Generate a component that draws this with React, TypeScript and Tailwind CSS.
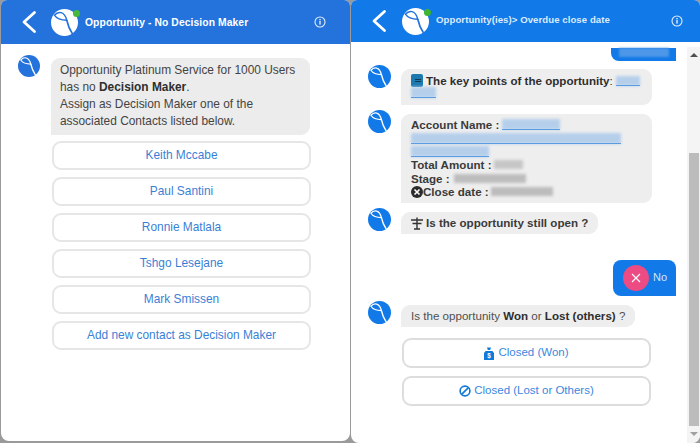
import React from "react";

function Logo({ size, bg, fg }: { size: number; bg: string; fg: string }) {
  return (
    <svg width={size} height={size} viewBox="0 0 24 24" className="shrink-0">
      <circle cx="12" cy="12" r="12" fill={bg} />
      <path d="M3 5.5 C6.5 1.5 12 2 14 10 C9 10 5 8.5 3 5.5 Z" fill="none" stroke={fg} strokeWidth="1.3" strokeLinejoin="round" />
      <path d="M14 10 C15 14.5 16.8 18.5 18.8 21.5" fill="none" stroke={fg} strokeWidth="1.5" strokeLinecap="round" />
    </svg>
  );
}

function HeaderLogo({ green }: { green: string }) {
  return (
    <div className="relative shrink-0">
      <Logo size={27} bg="#ffffff" fg="#2472db" />
      <div className="absolute top-[1px] right-[-2px] w-[7px] h-[7px] rounded-full" style={{ background: green }} />
    </div>
  );
}

function Back() {
  return (
    <svg width="16" height="24" viewBox="0 0 16 24" className="shrink-0">
      <path d="M13.5 2.5 L3 12 L13.5 21.5" fill="none" stroke="#ffffff" strokeWidth="2.8" strokeLinecap="round" strokeLinejoin="round" />
    </svg>
  );
}

function Info() {
  return (
    <svg width="12" height="12" viewBox="0 0 12 12" className="shrink-0">
      <circle cx="6" cy="6" r="5" fill="none" stroke="#e4eefb" strokeWidth="1.1" />
      <rect x="5.3" y="5" width="1.4" height="3.6" fill="#e4eefb" />
      <rect x="5.3" y="3" width="1.4" height="1.3" fill="#e4eefb" />
    </svg>
  );
}

function ContactButton({ label }: { label: string }) {
  return (
    <button className="w-[259px] h-[29px] rounded-[9px] border-2 border-[#e6e6e6] bg-white text-[#3a7fd6] text-[11.9px] flex items-center justify-center">
      {label}
    </button>
  );
}

function Smudge({ className }: { className: string }) {
  return <span className={"inline-block blur-[1.5px] " + className} />;
}

function BlueSmudge({ className }: { className: string }) {
  return (
    <span className={"relative inline-block " + className}>
      <span className="absolute inset-0 bg-[#b5cfeb] blur-[1.5px]" />
      <span className="absolute left-0 right-0 bottom-0 h-[1px] bg-[#5b9be0]" />
    </span>
  );
}

export default function App() {
  const contacts = ["Keith Mccabe", "Paul Santini", "Ronnie Matlala", "Tshgo Lesejane", "Mark Smissen", "Add new contact as Decision Maker"];
  return (
    <div className="w-[700px] h-[443px] overflow-hidden flex bg-[#9a9a9a] text-[#333333]" style={{ fontFamily: '"Liberation Sans", Arial, sans-serif' }}>
      {/* Left */}
      <div className="w-[349px] ml-[1px] h-[441px] bg-white rounded-t-[6px] rounded-b-[8px] overflow-hidden flex flex-col">
        <div className="h-[44px] bg-[#2472db] flex items-center pl-[20px] pr-[24px] shrink-0">
          <Back />
          <div className="w-[14px]" />
          <HeaderLogo green="#46b83a" />
          <span className="ml-[7px] mt-[1px] flex-1 text-white font-bold text-[10.3px] tracking-[0.1px]">Opportunity - No Decision Maker</span>
          <Info />
        </div>
        <div className="flex pl-[17px] pt-[11px]">
          <Logo size={22} bg="#2472db" fg="#ffffff" />
          <div className="ml-[11px] mt-[3px] flex flex-col">
            <div className="w-[259px] h-[77px] bg-[#ececec] rounded-[9px] rounded-bl-none pl-[9px] pt-[4px] text-[11.9px] leading-[17px] text-[#444444]">
              <div>Opportunity Platinum Service for 1000 Users</div>
              <div>has no <b className="text-[#2f2f2f]">Decision Maker</b>.</div>
              <div>Assign as Decision Maker one of the</div>
              <div>associated Contacts listed below.</div>
            </div>
            <div className="flex flex-col gap-[7px] mt-[6px] ml-[1px]">
              {contacts.map((c) => (
                <ContactButton key={c} label={c} />
              ))}
            </div>
          </div>
        </div>
      </div>
      <div className="w-[1px]" />
      {/* Right */}
      <div className="w-[349px] bg-white rounded-t-[6px] rounded-b-[8px] overflow-hidden flex flex-col h-[443px]">
        <div className="h-[42px] bg-[#1179e8] flex items-center pl-[20px] pr-[17px] shrink-0">
          <Back />
          <div className="w-[15px]" />
          <HeaderLogo green="#3fb52f" />
          <span className="ml-[7px] flex-1 text-[#dcebfb] text-[9.6px] font-bold tracking-[0.07px] -mt-[1px]">Opportunity(ies)&gt; Overdue close date</span>
          <Info />
        </div>
        <div className="flex flex-1 min-h-0">
          <div className="flex-1 min-w-0 flex flex-col pt-[6px] text-[#333333] text-[11.6px] leading-[13.4px]">
            <div className="self-end w-[65px] h-[13px] bg-[#1179e8] rounded-bl-[8px] mr-[11px] flex justify-center">
              <span className="w-[50px] h-[9px] bg-[#4c97e8] blur-[1px]" />
            </div>
            <div className="flex pl-[17px] mt-[4px]">
              <Logo size={23} bg="#1179e8" fg="#ffffff" />
              <div className="ml-[10px] mt-[4px] w-[251px] h-[36px] bg-[#eeeeee] rounded-[9px] rounded-bl-none pl-[10px] pt-[5px]">
                <div className="flex items-center h-[13px] font-bold text-[#2e2e2e]">
                  <span className="w-[12px] h-[13px] mr-[3px] rounded-[2px] bg-[#1c7ab0] flex flex-col items-end justify-center gap-[1px] pr-[2px]">
                    <span className="w-[6px] h-[1px] bg-[#143a50]" />
                    <span className="w-[6px] h-[1px] bg-[#143a50]" />
                  </span>
                  The key points of the opportunity<span className="font-normal">:</span>
                  <BlueSmudge className="w-[24px] h-[10px] ml-[3px]" />
                </div>
                <BlueSmudge className="w-[25px] h-[11px] block" />
              </div>
            </div>
            <div className="flex pl-[17px] mt-[5px]">
              <Logo size={23} bg="#1179e8" fg="#ffffff" />
              <div className="ml-[10px] mt-[4px] w-[251px] h-[89px] bg-[#eeeeee] rounded-[9px] rounded-bl-none pl-[10px] pt-[4px] font-bold text-[#3a3a3a]">
                <div className="flex items-center h-[13.4px]">
                  Account Name :
                  <BlueSmudge className="w-[58px] h-[11px] ml-[3px]" />
                </div>
                <div className="flex items-center h-[13.4px]">
                  <BlueSmudge className="w-[210px] h-[11px]" />
                </div>
                <div className="flex items-center h-[13.4px]">
                  <BlueSmudge className="w-[78px] h-[11px]" />
                </div>
                <div className="flex items-center h-[13.4px]">
                  Total Amount :
                  <Smudge className="w-[29px] h-[9px] ml-[2px] bg-[#c6c6c6]" />
                </div>
                <div className="flex items-center h-[13.4px]">
                  Stage :
                  <Smudge className="w-[72px] h-[9px] ml-[4px] bg-[#bdbdbd]" />
                </div>
                <div className="flex items-center h-[13.4px]">
                  <span className="w-[12px] h-[12px] rounded-full bg-[#2b2b2b] text-white flex items-center justify-center">
                    <svg width="8" height="8" viewBox="0 0 8 8"><path d="M1.5 1.5 L6.5 6.5 M6.5 1.5 L1.5 6.5" stroke="#fff" strokeWidth="1.6" /></svg>
                  </span>
                  Close date :
                  <Smudge className="w-[62px] h-[9px] ml-[2px] bg-[#bcbcbc]" />
                </div>
              </div>
            </div>
            <div className="flex pl-[17px] mt-[5px]">
              <Logo size={23} bg="#1179e8" fg="#ffffff" />
              <div className="ml-[10px] mt-[4px] h-[22px] bg-[#eeeeee] rounded-[9px] rounded-bl-none pl-[10px] pr-[10px] flex items-center font-bold text-[#3a3a3a]">
                <svg width="12" height="13" viewBox="0 0 12 13" className="mr-[3px]">
                  <path d="M0 3 H12 M1.5 6.5 H10.5 M6 0.5 V12 M3 12 H9" stroke="#333" strokeWidth="1.4" fill="none" />
                </svg>
                Is the opportunity still open ?
              </div>
            </div>
            <div className="self-end w-[63px] h-[36px] bg-[#1179e8] rounded-tl-[8px] rounded-tr-[8px] rounded-bl-[8px] mr-[11px] mt-[26px] flex items-center pl-[10px]">
              <span className="w-[26px] h-[26px] rounded-full bg-[#ec4b83] flex items-center justify-center">
                <svg width="10" height="10" viewBox="0 0 10 10"><path d="M1 1 L9 9 M9 1 L1 9" stroke="#fff" strokeWidth="1.2" /></svg>
              </span>
              <span className="ml-[4px] text-[11px] text-[#d3e6fb]">No</span>
            </div>
            <div className="flex pl-[17px] mt-[5px]">
              <Logo size={23} bg="#1179e8" fg="#ffffff" />
              <div className="ml-[10px] mt-[4px] h-[22px] bg-[#eeeeee] rounded-[9px] rounded-bl-none pl-[10px] pr-[10px] flex items-center text-[#505050] whitespace-pre">
                Is the opportunity <b className="text-[#2e2e2e]">Won</b> or <b className="text-[#2e2e2e]">Lost (others)</b> ?
              </div>
            </div>
            <div className="flex flex-col gap-[8px] mt-[11px] ml-[51px]">
              <button className="w-[249px] h-[30px] rounded-[9px] border-2 border-[#dddddd] bg-white text-[#3a87e0] text-[11.5px] flex items-center justify-center gap-[4px]">
                <svg width="10" height="13" viewBox="0 0 10 13">
                  <path d="M3 0.5 H7 L6.2 3 H3.8 Z M1.6 4 H8.4 L10 6 V13 H0 V6 Z" fill="#1179d8" />
                  <text x="5" y="11" fontSize="6.5" fontWeight="bold" fill="#fff" textAnchor="middle">$</text>
                </svg>
                Closed (Won)
              </button>
              <button className="w-[249px] h-[30px] rounded-[9px] border-2 border-[#dddddd] bg-white text-[#3a87e0] text-[11.5px] flex items-center justify-center gap-[3px]">
                <svg width="12" height="12" viewBox="0 0 12 12">
                  <circle cx="6" cy="6" r="4.9" fill="none" stroke="#1179d8" strokeWidth="1.6" />
                  <path d="M2.6 9.4 L9.4 2.6" stroke="#1179d8" strokeWidth="1.6" />
                </svg>
                Closed (Lost or Others)
              </button>
            </div>
          </div>
          <div className="w-[13px] shrink-0 mt-[5px] bg-[#f4f4f4] flex flex-col items-center">
            <div className="h-[12px] pt-[6px] w-full flex justify-center">
              <span className="w-0 h-0 border-l-[4px] border-r-[4px] border-b-[4px] border-l-transparent border-r-transparent border-b-[#505050]" />
            </div>
            <div className="mt-[94px] ml-[1px] w-[10px] flex-1 bg-[#bcbcbc]" />
            <div className="h-[17px] pt-[6px] w-full flex justify-center">
              <span className="w-0 h-0 border-l-[4px] border-r-[4px] border-t-[4px] border-l-transparent border-r-transparent border-t-[#a0a0a0]" />
            </div>
          </div>
        </div>
      </div>
    </div>
  );
}
